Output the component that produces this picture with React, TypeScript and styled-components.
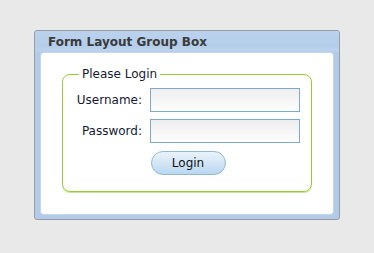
import React from "react";
import styled, { createGlobalStyle } from "styled-components";

const GlobalStyle = createGlobalStyle`
  html, body {
    margin: 0;
    padding: 0;
    background: #e9e9e9;
    font-family: "DejaVu Sans", Verdana, sans-serif;
  }
`;

const Page = styled.div`
  padding-top: 30px;
  display: flex;
  justify-content: center;
`;

const GroupBox = styled.section`
  width: 306px;
  box-sizing: border-box;
  border: 1px solid #9a9ea4;
  border-radius: 3px;
  background: #b1cbe8;
  padding: 0 6px 5px 6px;
  display: flex;
  flex-direction: column;
`;

const Header = styled.header`
  height: 22px;
  margin: 0 -6px;
  padding: 0 13px;
  display: flex;
  align-items: center;
  background: linear-gradient(#bbd2ed 0%, #b4cdea 70%, #bcd3ee 85%, #b1cbe8 100%);
  border-radius: 2px 2px 0 0;
  font-weight: bold;
  font-size: 12px;
  color: #3a3a3a;
`;

const Panel = styled.div`
  background: #fff;
  border-radius: 3px;
  padding: 14px 21px 22px 21px;
  box-shadow: 0 0 0 1px #c3d6ee;
`;

const Fieldset = styled.fieldset`
  margin: 0;
  border: 1px solid #99cc33;
  border-radius: 8px;
  box-shadow: 0 1px 0 #c8e49a;
  padding: 7px 11px 16px 13px;
  min-width: 0;
`;

const Legend = styled.legend`
  margin-left: 3px;
  padding: 0 3px;
  font-size: 12px;
  line-height: 14px;
  color: #141a33;
`;

const FormGrid = styled.div`
  display: grid;
  grid-template-columns: auto 150px;
  column-gap: 8px;
  row-gap: 7px;
  align-items: center;
`;

const Label = styled.label`
  font-size: 12px;
  color: #141a33;
  text-align: right;
`;

const Input = styled.input`
  box-sizing: border-box;
  width: 150px;
  height: 24px;
  margin: 0;
  border: 1px solid #7eaac8;
  background: linear-gradient(#eeeeee, #fdfdfd);
  outline: none;
  padding: 0 4px;
  font-family: inherit;
  font-size: 12px;
`;

const ButtonRow = styled.div`
  grid-column: 1 / -1;
  display: flex;
  justify-content: center;
  margin-top: 1px;
`;

const Button = styled.button`
  width: 75px;
  height: 24px;
  border: 1px solid #93b8d6;
  border-radius: 12px;
  background: linear-gradient(#eaf3fb, #d3e6f6 50%, #b9d7ef);
  font-family: inherit;
  font-size: 12px;
  color: #111;
  padding: 0;
  cursor: pointer;
`;

export default function App() {
  return (
    <>
      <GlobalStyle />
      <Page>
        <GroupBox>
          <Header>Form Layout Group Box</Header>
          <Panel>
            <Fieldset>
              <Legend>Please Login</Legend>
              <FormGrid>
                <Label htmlFor="username">Username:</Label>
                <Input id="username" type="text" />
                <Label htmlFor="password">Password:</Label>
                <Input id="password" type="password" />
                <ButtonRow>
                  <Button type="button">Login</Button>
                </ButtonRow>
              </FormGrid>
            </Fieldset>
          </Panel>
        </GroupBox>
      </Page>
    </>
  );
}
